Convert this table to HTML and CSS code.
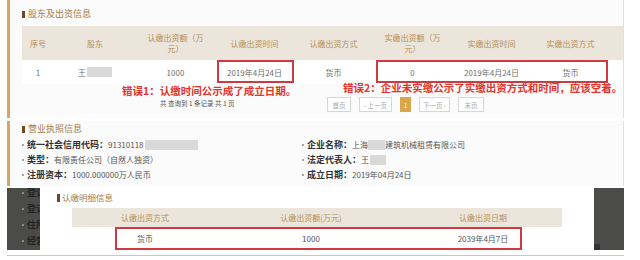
FILE: index.html
```html
<!DOCTYPE html>
<html lang="zh-CN">
<head>
<meta charset="utf-8">
<title>股东及出资信息</title>
<link rel="stylesheet" href="styles.css">
</head>
<body>
<div class="page">
  <section class="panel p1">
    <h2 class="title"><span class="mark"></span>股东及出资信息</h2>
    <div class="thead grid8">
      <div>序号</div>
      <div>股东</div>
      <div>认缴出资额（万<br>元）</div>
      <div>认缴出资时间</div>
      <div>认缴出资方式</div>
      <div>实缴出资额（万<br>元）</div>
      <div>实缴出资时间</div>
      <div>实缴出资方式</div>
    </div>
    <div class="trow grid8">
      <div>1</div>
      <div>王<span class="blur b-row"></span></div>
      <div>1000</div>
      <div>2019年4月24日</div>
      <div>货币</div>
      <div>0</div>
      <div>2019年4月24日</div>
      <div>货币</div>
      <span class="redbox rb1"></span>
      <span class="redbox rb2"></span>
    </div>
    <div class="foot">
      <span class="note err1">错误1：认缴时间公示成了成立日期。</span>
      <span class="note err2">错误2：企业未实缴公示了实缴出资方式和时间，应该空着。</span>
      <span class="count">共 查询到 1 条记录 共 1 页</span>
      <nav class="pager">
        <span class="pg w-first">首页</span>
        <span class="pg w-prev">‹ 上一页</span>
        <span class="pg w-cur active">1</span>
        <span class="pg w-next">下一页 ›</span>
        <span class="pg w-last">末页</span>
      </nav>
    </div>
  </section>

  <section class="panel p2">
    <h2 class="title"><span class="mark"></span>营业执照信息</h2>
    <div class="info">
      <div class="item"><span class="dot"></span><span class="lbl">统一社会信用代码：</span><span class="val">91310118</span><span class="blur b-code"></span></div>
      <div class="item"><span class="dot"></span><span class="lbl">企业名称：</span><span class="val">上海</span><span class="blur b-name"></span><span class="val">建筑机械租赁有限公司</span></div>
      <div class="item"><span class="dot"></span><span class="lbl">类型：</span><span class="val">有限责任公司（自然人独资）</span></div>
      <div class="item"><span class="dot"></span><span class="lbl">法定代表人：</span><span class="val">王</span><span class="blur b-rep"></span></div>
      <div class="item"><span class="dot"></span><span class="lbl">注册资本：</span><span class="val">1000.000000万人民币</span></div>
      <div class="item"><span class="dot"></span><span class="lbl">成立日期：</span><span class="val">2019年04月24日</span></div>
    </div>
  </section>

  <section class="lower">
    <div class="shade sl">
      <div class="shade-list">
        <div class="srow"><span class="sdot"></span><span class="stext">登记</span></div>
        <div class="srow"><span class="sdot"></span><span class="stext">登记</span></div>
        <div class="srow"><span class="sdot"></span><span class="stext">住所</span></div>
        <div class="srow"><span class="sdot"></span><span class="stext">经营</span></div>
      </div>
    </div>
    <div class="detail">
      <h2 class="title dt"><span class="mark"></span>认缴明细信息</h2>
      <div class="dtable">
        <div class="dhead grid3">
          <div>认缴出资方式</div>
          <div>认缴出资额(万元)</div>
          <div>认缴出资日期</div>
        </div>
        <div class="drow grid3">
          <div>货币</div>
          <div>1000</div>
          <div>2039年4月7日</div>
          <span class="redbox rb3"></span>
        </div>
      </div>
    </div>
    <div class="shade sr"><span class="sq"></span></div>
  </section>
</div>
</body>
</html>
```

FILE: styles.css
```css
body {
  margin: 0;
  background: #fff;
  font-family: "Noto Sans CJK SC", "Noto Sans", sans-serif;
}

.page {
  width: 640px;
  height: 260px;
  overflow: hidden;
  background: #fff;
}

.panel {
  box-sizing: border-box;
  width: 617px;
  margin-left: 7px;
  border-left: 3px solid #d9a75b;
  border-right: 1px solid #e0e0e0;
  background: #fbfbfb;
  padding-left: 12px;
}

.p1 { height: 118px; }

.title {
  margin: 0;
  box-sizing: border-box;
  display: flex;
  align-items: center;
  font-size: 9px;
  line-height: 12px;
  font-weight: 400;
  color: #a67d46;
}

.p1 .title { padding-top: 8px; height: 26px; align-items: flex-start; }

.mark {
  width: 3px;
  height: 7px;
  background: #6e4526;
  margin-right: 3px;
  margin-top: 3px;
}

.grid8 {
  display: grid;
  grid-template-columns: 32px 82px repeat(6, 79px);
}

.thead {
  height: 34px;
  background: #ece5db;
  color: #b59055;
  font-size: 8px;
  line-height: 11px;
}

.thead > div,
.trow > div,
.grid3 > div {
  display: flex;
  align-items: center;
  justify-content: center;
  text-align: center;
  white-space: nowrap;
}

.trow {
  position: relative;
  height: 24px;
  background: #fff;
  color: #6e6e6e;
  font-size: 8px;
}

.blur {
  display: inline-block;
  height: 10px;
  background: #d9d9d9;
}
.b-row { width: 25px; margin-left: 1px; }
.b-code { width: 53px; margin-left: 1px; }
.b-name { width: 17px; }
.b-rep { width: 16px; margin-left: 1px; }

.redbox {
  position: absolute;
  box-sizing: border-box;
  border: 2px solid #cf3a40;
}
.rb1 { left: 195px; top: 0; width: 77px; height: 23px; }
.rb2 { left: 354px; top: 0; width: 232px; height: 23px; }

.foot {
  position: relative;
  height: 34px;
  box-sizing: border-box;
  padding-top: 13px;
  display: flex;
  align-items: flex-start;
}

.note {
  position: absolute;
  font-size: 10.5px;
  line-height: 11px;
  font-weight: 700;
  color: #e3352c;
  white-space: nowrap;
}
.err1 { left: 100px; top: 1px; }
.err2 { left: 321px; top: -2px; }

.count {
  width: 167px;
  margin-left: 138px;
  margin-top: 2px;
  font-size: 6.5px;
  line-height: 8px;
  color: #555;
  white-space: nowrap;
}

.pager {
  display: flex;
  gap: 8px;
}

.pg {
  box-sizing: border-box;
  height: 15px;
  border: 1px solid #d6d6d6;
  background: #fff;
  color: #aaa;
  font-size: 6.5px;
  display: flex;
  align-items: center;
  justify-content: center;
  white-space: nowrap;
}
.w-first { width: 24px; }
.w-prev { width: 33px; }
.w-cur { width: 11px; }
.w-next { width: 31px; }
.w-last { width: 26px; }
.pg.active {
  background: #d9a64e;
  border-color: #d9a64e;
  color: #fff;
}

.p2 {
  margin-top: 3px;
  height: 65px;
}
.p2 .title { height: 16px; padding-top: 2px; align-items: flex-start; }

.info {
  display: grid;
  grid-template-columns: 280px 1fr;
  grid-auto-rows: 15px;
}

.item {
  display: flex;
  align-items: center;
  white-space: nowrap;
}

.dot {
  width: 2px;
  height: 2px;
  background: #a8a8a8;
  margin-right: 3px;
  flex: none;
}

.lbl {
  font-weight: 700;
  color: #333;
  font-size: 9px;
}

.val {
  color: #555;
  font-size: 8px;
}

.lower {
  display: flex;
  align-items: flex-start;
  box-sizing: border-box;
  width: 617px;
  height: 70px;
  margin-left: 7px;
  border-bottom: 1px solid #c9c9c9;
}

.shade {
  background: #4b4b4a;
  margin-top: 2px;
  height: 62px;
  overflow: hidden;
  position: relative;
  flex: none;
}
.sl { width: 33px; }
.sr { width: 30px; }

.shade-list {
  margin-top: -3px;
  padding-left: 15px;
}
.srow {
  display: flex;
  align-items: center;
  height: 16px;
}
.sdot {
  width: 2px;
  height: 2px;
  background: #8a8a8a;
  margin-right: 3px;
  flex: none;
}
.stext {
  font-size: 9px;
  line-height: 12px;
  font-weight: 700;
  color: #232323;
  white-space: nowrap;
}

.sq {
  position: absolute;
  left: 0;
  bottom: 0;
  width: 6px;
  height: 6px;
  background: #333;
}

.detail {
  width: 554px;
  height: 69px;
  background: #fff;
  flex: none;
}

.title.dt {
  height: 22px;
  padding-top: 5px;
  padding-left: 17px;
  align-items: flex-start;
  font-size: 8.5px;
}
.title.dt .mark { margin-right: 2px; height: 8px; }

.dtable {
  margin-left: 32px;
  width: 490px;
}

.grid3 {
  display: grid;
  grid-template-columns: 146px 186px 158px;
}

.dhead {
  height: 19px;
  background: #ece5db;
  color: #b59055;
  font-size: 8px;
}

.drow {
  position: relative;
  height: 23px;
  background: #fff;
  color: #555;
  font-size: 8px;
}

.rb3 { left: 43px; top: 0; width: 407px; height: 23px; }
```
